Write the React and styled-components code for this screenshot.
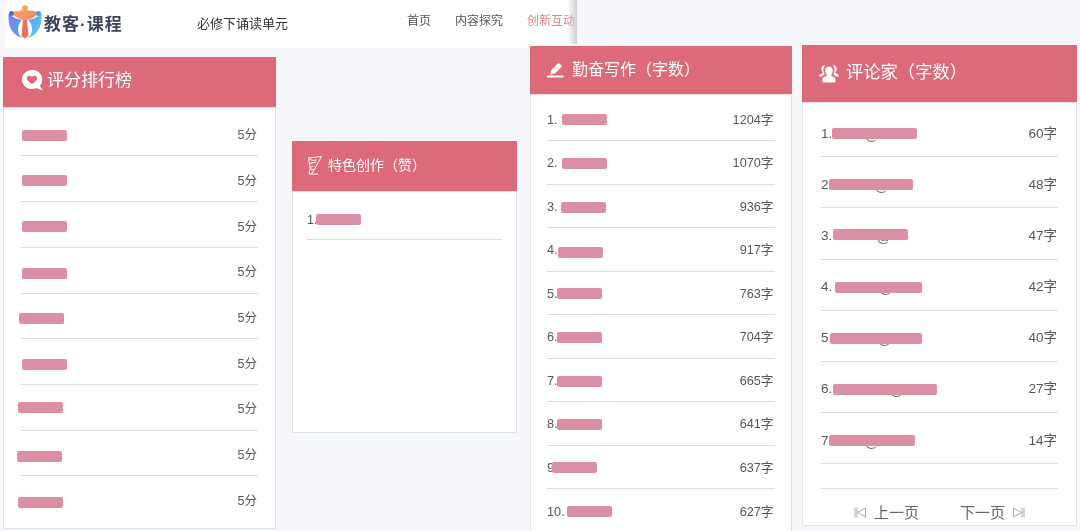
import React from 'react'
import styled, { createGlobalStyle } from 'styled-components'

const GlobalStyle = createGlobalStyle`
  html, body {
    margin: 0;
    padding: 0;
    background: #f5f7fb;
  }
  * {
    box-sizing: border-box;
  }
`
const Page = styled.div`
  width: 1080px;
  height: 531px;
  overflow: hidden;
  background: #f5f7fb;
  font-family: "Liberation Sans", "Noto Sans CJK SC", sans-serif;
  color: #555;
  white-space: nowrap;
  filter: blur(0.5px);
`
const Nav = styled.div`
  position: relative;
  width: 572px;
  height: 48px;
  margin-left: 5px;
  background: #fff;
  display: flex;
  align-items: flex-start;
`
const Fade = styled.div`
  position: absolute;
  right: 0;
  top: 0;
  width: 10px;
  height: 44px;
  background: linear-gradient(to right, rgba(207, 207, 207, 0), rgba(200, 200, 200, 0.85));
`
const Brand = styled.div`
  flex: none;
  display: flex;
  align-items: center;
  width: 192px;
  height: 44px;
  padding-left: 3px;
`
const BrandName = styled.span`
  margin-left: 2px;
  font-size: 17px;
  font-weight: 700;
  letter-spacing: 1px;
  color: #3d4559;
`
const Unit = styled.div`
  flex: none;
  width: 210px;
  height: 47px;
  line-height: 47px;
  font-size: 13px;
  color: #333;
`
const Link = styled.a`
  flex: none;
  font-size: 12px;
  height: 42px;
  line-height: 42px;
  margin-right: 24px;
  color: ${p => (p.$active ? '#d9838f' : '#555')};
`
const Columns = styled.div`
  position: relative;
  display: flex;
  align-items: flex-start;
  margin-top: -3px;
`
const Card = styled.div`
  display: flex;
  flex-direction: column;
  flex: none;
  width: ${p => p.$width}px;
  height: ${p => p.$height}px;
  margin-top: ${p => p.$top}px;
  margin-left: ${p => p.$left}px;
`
const Header = styled.div`
  flex: none;
  display: flex;
  align-items: center;
  height: ${p => p.$height}px;
  padding-left: ${p => p.$pad}px;
  padding-bottom: ${p => p.$lift || 0}px;
  gap: ${p => p.$gap}px;
  background: #dc6a78;
  color: #fff;
  font-size: ${p => p.$size}px;
  line-height: 1;
`
const List = styled.div`
  flex: 1;
  display: flex;
  flex-direction: column;
  padding: ${p => p.$pad}px ${p => p.$side}px 0;
  background: #fff;
  border: 1px solid #dfe1e8;
  border-top-color: #e4e0e4;
`
const Row = styled.div`
  flex: none;
  display: flex;
  align-items: center;
  justify-content: space-between;
  height: ${p => p.$height}px;
  padding-top: ${p => p.$lift}px;
  font-size: ${p => p.$size}px;
  color: #555;
  border-bottom: ${p => (p.$last ? '0' : '1px solid #dcdcdf')};
`
const Name = styled.span`
  position: relative;
  display: block;
  min-width: 10px;
  height: 1.2em;
  line-height: 1.2em;
`
const Value = styled.span`
  height: 1.2em;
  line-height: 1.2em;
  padding-right: 1px;
`
const At = styled.span`
  position: absolute;
  top: 2px;
  left: ${p => p.$x}px;
  color: #666;
`
const Mask = styled.span`
  position: absolute;
  top: 50%;
  left: ${p => p.$x}px;
  width: ${p => p.$w}px;
  height: 11px;
  margin-top: ${p => p.$dy - 5.5}px;
  border-radius: 2px;
  background: #da8fa4;
`
const Spacer = styled.div`
  flex: none;
  height: 25px;
  border-bottom: 1px solid #dcdcdf;
`
const Pager = styled.div`
  flex: 1;
  display: flex;
  align-items: center;
  padding: 10px 0 0 33px;
  font-size: 15px;
  line-height: 1;
  color: #666;
`
const PageLink = styled.span`
  display: flex;
  align-items: center;
  gap: 8px;
  margin-right: 41px;
`

const HeartIcon = () => (
  <svg width="23" height="21" viewBox="0 0 23 21">
    <path
      fillRule="evenodd"
      fill="#fff"
      d="M11 0a10 9.5 0 1 0 4.6 17.9c1.6 1.3 4 2.1 6.4 1.8-1.5-.9-2.6-2.3-2.9-4.3A9.5 9.5 0 0 0 11 0zM11 14.6 6.600 10.400C5 8.600 6.200 5.800 8.500 5.800c1 0 1.900.5 2.500 1.400.6-.9 1.500-1.400 2.500-1.400 2.300 0 3.500 2.800 1.900 4.600z"
    />
  </svg>
)

const ConeIcon = () => (
  <svg width="16" height="20" viewBox="0 0 16 20" fill="none" stroke="#fff" strokeWidth="1" strokeLinejoin="round">
    <path d="M1.500 3 14.500 1.500 7 15 3.200 13.500z" />
    <path d="M1.500 3c2 2.400 5 3 8.200 1.800M2.500 8.500l6.500-1.500M3 12.500l3.500-1.500" />
    <path d="M3.200 13.500 2 19h9M7 15l-2.500 4" />
  </svg>
)

const PenIcon = () => (
  <svg width="17" height="16" viewBox="0 0 17 16" fill="#fff">
    <path d="M11.300 1 15.500 4 8 11.400 3.200 12.600 4.400 8z" />
    <rect x="0" y="13.600" width="16.500" height="2" rx="0.6" />
  </svg>
)

const PeopleIcon = () => (
  <svg width="20" height="19" viewBox="0 0 20 19" fill="#fff">
    <path d="M5.600 1.200C3.600 1.200 2.400 2.700 2.400 4.800c0 1.500.6 2.800 1.500 3.600-.2.9-1.600 1.200-2.700 1.900C.4 10.800 0 11.500 0 12.500h2.800c.9-1 2-1.600 3-2.100-.8-1.100-1.300-2.600-1.300-4.200 0-1.900.6-3.500 1.700-4.600-.2-.2-.4-.4-.6-.4zM14.400 1.200c-.2 0-.4.2-.6.4 1.100 1.100 1.700 2.700 1.700 4.600 0 1.600-.5 3.100-1.300 4.200 1 .5 2.100 1.100 3 2.100H20c0-1-.4-1.700-1.200-2.200-1.100-.7-2.500-1-2.700-1.900.9-.8 1.500-2.100 1.500-3.600 0-2.100-1.200-3.600-3.200-3.600z" />
    <path d="M10 2.600c-2.300 0-3.800 1.700-3.800 4.200 0 1.700.7 3.200 1.800 4.100-.2 1-1.900 1.500-3.100 2.200-.9.6-1.400 1.400-1.400 2.600v1.800c0 .6.4 1 1 1h11c.6 0 1-.4 1-1v-1.800c0-1.200-.5-2-1.400-2.600-1.200-.7-2.900-1.200-3.100-2.200 1.100-.9 1.800-2.400 1.800-4.100 0-2.500-1.500-4.200-3.800-4.200z" />
  </svg>
)

const Logo = () => (
  <svg width="34" height="34" viewBox="0 0 34 34">
    <defs>
      <linearGradient id="shield" x1="0" y1="0" x2="1" y2="0.4">
        <stop offset="0" stopColor="#7f7bf0" />
        <stop offset="0.55" stopColor="#5aa0f2" />
        <stop offset="1" stopColor="#58c6ee" />
      </linearGradient>
      <linearGradient id="arms" x1="0" y1="0" x2="1" y2="0">
        <stop offset="0" stopColor="#f7a25c" />
        <stop offset="1" stopColor="#f08a6c" />
      </linearGradient>
    </defs>
    <path fill="url(#shield)" d="M0.500 9C0 20 3 31 17 33.500 31 31 34 20 33.500 9 29 12 24 15 17 15S5 12 .5 9z" />
    <ellipse cx="17" cy="24" rx="7" ry="10" fill="#fff" />
    <path fill="#ee6f5d" d="M15 14h4l1.500 17-3.500 2.500-3.500-2.500z" />
    <path fill="url(#arms)" d="M5 7c4-1 8-2 12-2s8 1 12 2l-1.500 4c-3 2-6.500 4-10.500 4s-7.500-2-10.500-4z" />
    <circle cx="17" cy="3" r="2.800" fill="#f6a35a" />
    <circle cx="3.500" cy="8.500" r="2.500" fill="#4f6fd8" />
    <circle cx="30.500" cy="8.500" r="2.500" fill="#4f9bdc" />
  </svg>
)

const FirstIcon = () => (
  <svg width="12" height="11" viewBox="0 0 12 11" fill="none" stroke="#aaa" strokeWidth="1">
    <path d="M1 .5v10M3 .5v10M11.500 1 3.500 5.500l8 4.500z" />
  </svg>
)

const LastIcon = () => (
  <svg width="12" height="11" viewBox="0 0 12 11" fill="none" stroke="#aaa" strokeWidth="1">
    <path d="M11 .5v10M9 .5v10M.5 1l8 4.500-8 4.500z" />
  </svg>
)

const scoreRows = [
  [1, 0], [1, -1], [1, -1], [1, 1], [-2, 0], [1, 0], [-3, -2], [-4, 1], [-3, 1],
]

const wordRows = [
  [15, -1, '1204字'], [15, 0, '1070字'], [14, 0, '936字'], [11, 2, '917字'], [10, -1, '763字'],
  [10, 0, '704字'], [10, 0, '665字'], [10, 0, '641字'], [5, -1, '637字'], [20, -1, '627字'],
]

const reviewRows = [
  [11, 85, 44, 0, '60字'], [8, 84, 54, 0, '48字'], [12, 75, 56, -1, '47字'], [14, 87, 58, 0, '42字'],
  [9, 92, 57, 0, '40字'], [12, 104, 69, 0, '27字'], [8, 86, 44, 0, '14字'],
]

function App() {
  return (
    <Page>
      <GlobalStyle />
      <Nav>
        <Brand>
          <Logo />
          <BrandName>教客·课程</BrandName>
        </Brand>
        <Unit>必修下诵读单元</Unit>
        <Link>首页</Link>
        <Link>内容探究</Link>
        <Link $active>创新互动</Link>
        <Fade />
      </Nav>
      <Columns>
        <Card $width={273} $height={472} $top={12} $left={3}>
          <Header $height={50} $pad={18} $gap={3} $size={17} $lift={3}>
            <HeartIcon />
            评分排行榜
          </Header>
          <List $pad={2.8} $side={17}>
            {scoreRows.map(([x, dy], i) => (
              <Row key={i} $height={45.7} $lift={5} $size={12.5} $last={i === scoreRows.length - 1}>
                <Name>
                  <Mask $x={x} $w={45} $dy={dy} />
                </Name>
                <Value>5分</Value>
              </Row>
            ))}
          </List>
        </Card>
        <Card $width={225} $height={292} $top={96} $left={16}>
          <Header $height={50} $pad={15} $gap={5} $size={14} $lift={2}>
            <ConeIcon />
            特色创作（赞）
          </Header>
          <List $pad={0} $side={14}>
            <Row $height={48} $lift={9} $size={12.5}>
              <Name>
                1.
                <Mask $x={9} $w={45} $dy={-1} />
              </Name>
            </Row>
          </List>
        </Card>
        <Card $width={261.5} $height={490} $top={1} $left={13}>
          <Header $height={48} $pad={17} $gap={8} $size={16}>
            <PenIcon />
            勤奋写作（字数）
          </Header>
          <List $pad={2.5} $side={16}>
            {wordRows.map(([x, dy, count], i) => (
              <Row key={i} $height={43.5} $lift={3} $size={12.7} $last={i === wordRows.length - 1}>
                <Name>
                  {i + 1}.
                  <Mask $x={x} $w={45} $dy={dy} />
                </Name>
                <Value>{count}</Value>
              </Row>
            ))}
          </List>
        </Card>
        <Card $width={275} $height={481} $top={0} $left={10.5}>
          <Header $height={57} $pad={17} $gap={7} $size={17.3} $lift={1}>
            <PeopleIcon />
            评论家（字数）
          </Header>
          <List $pad={3} $side={18}>
            {reviewRows.map(([x, w, at, dy, count], i) => (
              <Row key={i} $height={51.2} $lift={5} $size={13.5}>
                <Name>
                  {i + 1}.
                  <At $x={at}>@</At>
                  <Mask $x={x} $w={w} $dy={dy} />
                </Name>
                <Value>{count}</Value>
              </Row>
            ))}
            <Spacer />
            <Pager>
              <PageLink>
                <FirstIcon />
                上一页
              </PageLink>
              <PageLink>
                下一页
                <LastIcon />
              </PageLink>
            </Pager>
          </List>
        </Card>
      </Columns>
    </Page>
  )
}

export default App
